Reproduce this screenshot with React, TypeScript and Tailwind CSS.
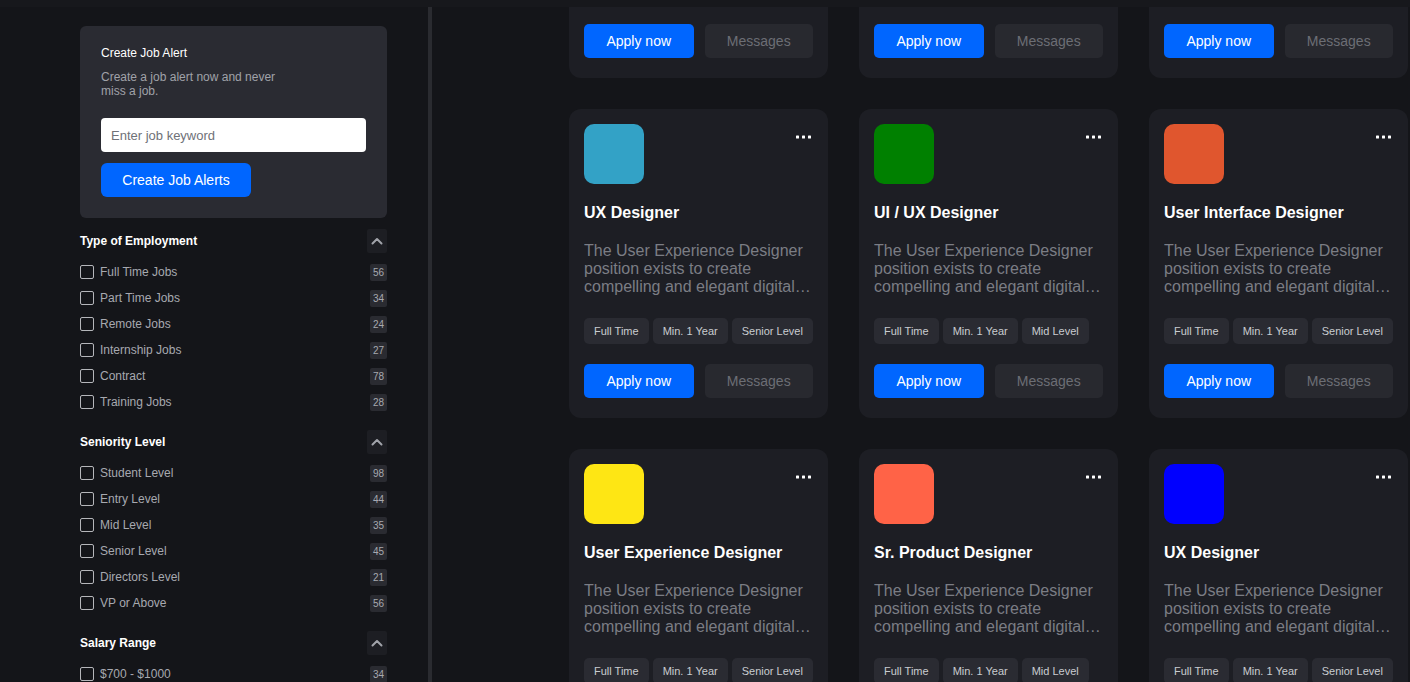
import { useState } from "react";

const font = "font-['Liberation_Sans',Arial,sans-serif]";

const filters = [
  {
    title: "Type of Employment",
    items: [
      ["Full Time Jobs", 56],
      ["Part Time Jobs", 34],
      ["Remote Jobs", 24],
      ["Internship Jobs", 27],
      ["Contract", 78],
      ["Training Jobs", 28],
    ],
  },
  {
    title: "Seniority Level",
    items: [
      ["Student Level", 98],
      ["Entry Level", 44],
      ["Mid Level", 35],
      ["Senior Level", 45],
      ["Directors Level", 21],
      ["VP or Above", 56],
    ],
  },
  {
    title: "Salary Range",
    items: [["$700 - $1000", 34]],
  },
] as const;

const jobs = [
  { title: "UX Designer", color: "bg-[#33a2c6]", level: "Senior Level" },
  { title: "UI / UX Designer", color: "bg-[#008000]", level: "Mid Level" },
  { title: "User Interface Designer", color: "bg-[#e0562e]", level: "Senior Level" },
  { title: "User Experience Designer", color: "bg-[#fee614]", level: "Senior Level" },
  { title: "Sr. Product Designer", color: "bg-[#ff6347]", level: "Mid Level" },
  { title: "UX Designer", color: "bg-[#0000ff]", level: "Senior Level" },
];

function ChevronUp() {
  return (
    <svg width="12" height="8" viewBox="0 0 12 8" fill="none">
      <path d="M1.5 6.5 6 2l4.5 4.5" stroke="#a1a3aa" strokeWidth="2" strokeLinecap="round" strokeLinejoin="round" />
    </svg>
  );
}

function Dots() {
  return (
    <svg width="15" height="4" viewBox="0 0 15 4" fill="#ffffff">
      <rect x="0" y="0.5" width="3" height="3" rx="0.6" />
      <rect x="6" y="0.5" width="3" height="3" rx="0.6" />
      <rect x="12" y="0.5" width="3" height="3" rx="0.6" />
    </svg>
  );
}

function FilterGroup({ group }: { group: (typeof filters)[number] }) {
  const [checked, setChecked] = useState<Record<string, boolean>>({});
  return (
    <div className="flex flex-col">
      <div className="flex h-[24px] items-center justify-between">
        <span className="text-[12px] font-bold text-white">{group.title}</span>
        <button className="flex h-[24px] w-[20px] items-center justify-center rounded-[2px] bg-[#1d1e23]">
          <ChevronUp />
        </button>
      </div>
      <div className="mt-[6px] flex flex-col">
        {group.items.map(([label, count]) => (
          <label key={label} className="flex h-[26px] cursor-pointer items-center justify-between">
            <span className="flex items-center gap-[6px]">
              <input
                type="checkbox"
                checked={!!checked[label]}
                onChange={() => setChecked((c) => ({ ...c, [label]: !c[label] }))}
                className="h-[14px] w-[14px] appearance-none rounded-[2px] border border-[#b5b6ba] bg-transparent"
              />
              <span className="text-[12px] text-[#a7a9b0]">{label}</span>
            </span>
            <span className="flex h-[17px] min-w-[17px] items-center justify-center rounded-[2px] bg-[#2a2b31] px-[2px] text-[10px] text-[#a7a9b0]">
              {count}
            </span>
          </label>
        ))}
      </div>
    </div>
  );
}

function Actions() {
  return (
    <div className="flex gap-[11px]">
      <button className="h-[34px] w-[110px] rounded-[5px] bg-[#0066ff] text-[14px] text-white">Apply now</button>
      <button className="h-[34px] w-[109px] rounded-[5px] bg-[#28292f] text-[14px] text-[#6c6e75]">Messages</button>
    </div>
  );
}

function JobCard({ job }: { job: (typeof jobs)[number] }) {
  return (
    <div className="flex h-[309px] flex-col rounded-[12px] bg-[#1d1e24] px-[15px] pt-[15px] pb-[20px]">
      <div className="flex items-start justify-between">
        <div className={`h-[60px] w-[60px] rounded-[10px] ${job.color}`} />
        <button className="mt-[11px] mr-[2px]">
          <Dots />
        </button>
      </div>
      <h3 className="mt-[19px] text-[16px] leading-[20px] font-bold text-white">{job.title}</h3>
      <p className="mt-[19px] line-clamp-3 text-[16px] leading-[18px] text-[#7b7d84]">
        The User Experience Designer position exists to create compelling and elegant digital user experiences
        through design thinking.
      </p>
      <div className="mt-[22px] flex gap-[4px]">
        {["Full Time", "Min. 1 Year", job.level].map((t) => (
          <span
            key={t}
            className="flex h-[26px] items-center rounded-[5px] bg-[#2a2b32] px-[10px] text-[11px] text-[#c9cbd0]"
          >
            {t}
          </span>
        ))}
      </div>
      <div className="mt-auto">
        <Actions />
      </div>
    </div>
  );
}

export default function App() {
  return (
    <div className={`h-[682px] overflow-hidden bg-[#141519] ${font}`}>
      <div className="h-[7px] bg-[#17181c]" />
      <div className="flex h-[675px]">
        <aside className="ml-[80px] w-[307px] shrink-0 pt-[19px]">
          <div className="rounded-[6px] bg-[#2a2b32] px-[21px] pt-[20px] pb-[21px]">
            <h2 className="text-[12px] leading-[14px] text-white">Create Job Alert</h2>
            <p className="mt-[10px] w-[185px] text-[12px] leading-[14px] text-[#a0a2a9]">
              Create a job alert now and never miss a job.
            </p>
            <input
              placeholder="Enter job keyword"
              className="mt-[20px] h-[34px] w-full rounded-[4px] bg-white px-[10px] text-[13px] text-[#222] outline-none placeholder:text-[#6f7178]"
            />
            <button className="mt-[11px] h-[34px] w-[150px] rounded-[6px] bg-[#0066ff] text-[14px] text-white">
              Create Job Alerts
            </button>
          </div>
          <div className="mt-[11px] flex flex-col gap-[15px]">
            {filters.map((g) => (
              <FilterGroup key={g.title} group={g} />
            ))}
          </div>
        </aside>
        <div className="ml-[41px] w-[4px] shrink-0 bg-[#2a2b30]" />
        <main className="ml-[137px] min-w-0 flex-1 overflow-hidden">
          <div className="grid w-[839px] grid-cols-[repeat(3,259px)] gap-[31px]">
            {[0, 1, 2].map((i) => (
              <div key={i} className="rounded-b-[12px] bg-[#1d1e24] px-[15px] pt-[17px] pb-[20px]">
                <Actions />
              </div>
            ))}
            {jobs.map((j, i) => (
              <JobCard key={i} job={j} />
            ))}
          </div>
        </main>
      </div>
    </div>
  );
}
